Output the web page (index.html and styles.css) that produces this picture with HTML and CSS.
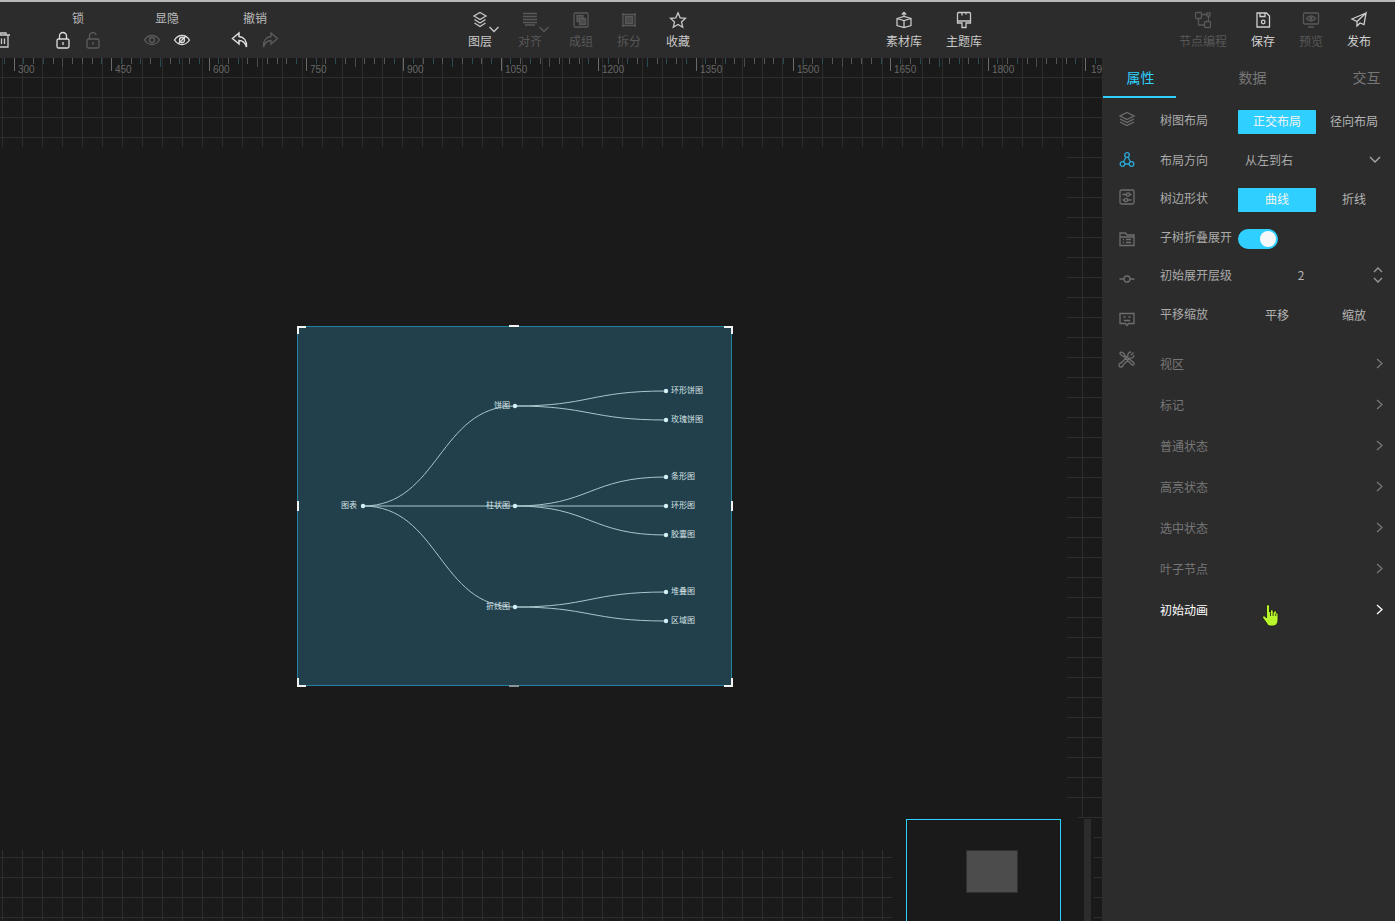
FILE: index.html
```html
<!DOCTYPE html>
<html lang="zh-CN">
<head>
<meta charset="utf-8">
<title>树图编辑器</title>
<link rel="stylesheet" href="styles.css">
</head>
<body>
<div class="app">
  <header class="toolbar">
    <div class="trash"><svg class="ic" width="16" height="18" viewBox="0 0 16 18"><path d="M1 4h14M5 4V2h6v2M3 4v12h10V4M6.500 7.500v5.500M9.500 7.500v5.500"/></svg></div>
    <div class="pair pair-lock">
      <div class="pair-title">锁</div>
      <div class="pair-icons">
        <svg class="ic" width="18" height="18" viewBox="0 0 18 18"><rect x="3" y="8" width="12" height="9" rx="1.500"/><path d="M5.500 8V5a3.500 3.500 0 0 1 7 0v3M9 11v3"/></svg>
        <svg class="ic dim" width="18" height="18" viewBox="0 0 18 18"><rect x="3" y="8" width="12" height="9" rx="1.500"/><path d="M5.500 8V5a3.500 3.500 0 0 1 6.800-1M9 11v3"/></svg>
      </div>
    </div>
    <div class="pair pair-eye">
      <div class="pair-title">显隐</div>
      <div class="pair-icons">
        <svg class="ic dim" width="18" height="18" viewBox="0 0 18 18"><path d="M1.500 9C3.500 5.800 6 4.500 9 4.500s5.500 1.300 7.500 4.500c-2 3.200-4.500 4.500-7.500 4.500S3.500 12.200 1.500 9z"/><circle cx="9" cy="9" r="2.500"/></svg>
        <svg class="ic" width="18" height="18" viewBox="0 0 18 18"><path d="M1.500 9C3.500 5.800 6 4.500 9 4.500s5.500 1.300 7.500 4.500c-2 3.200-4.500 4.500-7.500 4.500S3.500 12.200 1.500 9z"/><circle cx="9" cy="9" r="2.500"/><path d="M13 5 5 13"/></svg>
      </div>
    </div>
    <div class="pair pair-undo">
      <div class="pair-title">撤销</div>
      <div class="pair-icons">
        <svg class="ic thick" width="18" height="18" viewBox="0 0 18 18"><path d="M8 2 1.500 7.500 8 13V9.500c3.500 0 6 1.500 7.500 6.500.5-6-2.500-10-7.500-10.500z"/></svg>
        <svg class="ic dim" width="18" height="18" viewBox="0 0 18 18"><path d="M10 2 16.500 7.500 10 13V9.500c-3.500 0-6 1.500-7.500 6.500C2 10 5 6 10 5.500z"/></svg>
      </div>
    </div>

    <div class="tools tools-mid">
      <div class="tool tool-w50">
        <svg class="ic" width="18" height="18" viewBox="0 0 18 18"><path d="M9 1.500 15 5 9 8.500 3 5zM3.500 8.500 9 12l5.500-3.500M3.500 12 9 15.500l5.500-3.500"/></svg>
        <svg class="tool-caret ic" width="12" height="7" viewBox="0 0 12 7"><path d="M1.500 1 6 5.500 10.500 1"/></svg>
        <span>图层</span>
      </div>
      <div class="tool tool-w50 off">
        <svg class="ic" width="18" height="18" viewBox="0 0 18 18"><path d="M2 2.500h14M2 5.500h14M2 8.500h14M2 11.500h14M4 14h10"/></svg>
        <svg class="tool-caret ic" width="12" height="7" viewBox="0 0 12 7"><path d="M1.500 1 6 5.500 10.500 1"/></svg>
        <span>对齐</span>
      </div>
      <div class="tool tool-w48 tool-group off">
        <svg class="ic" width="18" height="18" viewBox="0 0 18 18"><rect x="2" y="2" width="14" height="14" rx="1"/><rect class="fill" x="5" y="4.500" width="6" height="6"/><rect class="fill" x="7.500" y="7.500" width="6" height="6"/></svg>
        <span>成组</span>
      </div>
      <div class="tool tool-w48 off">
        <svg class="ic" width="18" height="18" viewBox="0 0 18 18"><path d="M3 2v14M15 2v14M2 3.500h14M2 14.500h14"/><rect class="fill" x="5.500" y="5.500" width="7" height="7"/></svg>
        <span>拆分</span>
      </div>
      <div class="tool tool-w48 tool-star">
        <svg class="ic" width="18" height="18" viewBox="0 0 18 18"><path d="M9 1.800 11.200 6.800 16.500 7.300 12.500 10.900 13.700 16.200 9 13.400 4.300 16.200 5.500 10.900 1.500 7.300 6.800 6.800z"/></svg>
        <span>收藏</span>
      </div>
    </div>

    <div class="tools tools-lib">
      <div class="tool tool-w60">
        <svg class="ic" width="18" height="18" viewBox="0 0 18 18"><path d="M2 7.500 9 5.500l7 2v7l-7 2-7-2zM2 7.500l7 2 7-2M9 9.500v7M9 6V1.500M6.800 3.500 9 1.500l2.200 2"/></svg>
        <span>素材库</span>
      </div>
      <div class="tool tool-w60">
        <svg class="ic" width="18" height="18" viewBox="0 0 18 18"><path d="M3.500 1.500h11a1 1 0 0 1 1 1V10h-13V2.500a1 1 0 0 1 1-1zM2.500 10v2h4.500v4.500h4V12h4.500v-2M7 1.500v3M11 1.500v2"/></svg>
        <span>主题库</span>
      </div>
    </div>

    <div class="tools tools-end">
      <div class="tool tool-w60 off">
        <svg class="ic" width="18" height="18" viewBox="0 0 18 18"><rect x="1.500" y="1.500" width="6" height="6" rx="1"/><rect x="10.500" y="10.500" width="6" height="6" rx="1"/><rect x="13" y="2" width="3" height="3"/><path d="M7.500 3.500H13M14.500 5v5.500M4.500 7.500v6.500h6"/></svg>
        <span>节点编程</span>
      </div>
      <div class="tool tool-w48 tool-save bold">
        <svg class="ic" width="18" height="18" viewBox="0 0 18 18"><path d="M3 2h9.500L15.500 5v11H3zM6 2v3.500h5V2"/><circle cx="9.200" cy="11" r="1.800"/></svg>
        <span>保存</span>
      </div>
      <div class="tool tool-w48 off">
        <svg class="ic" width="18" height="18" viewBox="0 0 18 18"><rect x="1.500" y="2" width="15" height="11" rx="1"/><path d="M4.500 7.500C6 5.500 7.500 5 9 5s3 .5 4.500 2.500C12 9.500 10.500 10 9 10S6 9.500 4.500 7.500zM6 16h6"/><circle cx="9" cy="7.500" r="1"/></svg>
        <span>预览</span>
      </div>
      <div class="tool tool-w48 bold">
        <svg class="ic" width="18" height="18" viewBox="0 0 18 18"><path d="M16 2 2 8l5 2.500zM16 2 7 10.500V15l3-3 4 1.500z"/></svg>
        <span>发布</span>
      </div>
    </div>
  </header>

  <div class="workspace">
    <main class="canvas">
      <svg class="stage" width="1102" height="863" viewBox="0 0 1102 863">
        <defs>
          <pattern id="grid" width="20" height="20" patternUnits="userSpaceOnUse">
            <path class="grid-line" d="M2.500 0V20M0 19.500H20"/>
          </pattern>
        </defs>
        <rect class="grid-fill" x="0" y="0" width="1102" height="89"/>
        <rect class="grid-fill" x="1067" y="89" width="35" height="670"/>
        <rect class="grid-fill" x="0" y="792" width="892" height="71"/>
        <path class="grid-line" d="M1078 759.500H1102M1094 779.500H1102M1094 799.500H1102M1094 819.500H1102M1094 839.500H1102M1094 859.500H1102"/>

        <path class="tick-major" d="M14.500 0V13M111.500 0V13M209.500 0V13M306.500 0V13M403.500 0V13M501.500 0V13M598.500 0V13M696.500 0V13M793.500 0V13M890.500 0V13M988.500 0V13M1085.500 0V13"/>
        <path class="tick-mid" d="M62.500 0V9M257.500 0V9M355.500 0V9M549.500 0V9M744.500 0V9M842.500 0V9M1036.500 0V9"/>
        <path class="tick-teal-long" d="M160.500 0V9M452.500 0V9M647.500 0V9M939.500 0V9"/>
        <path class="tick-minor" d="M33.500 0V6M53.500 0V6M72.500 0V6M82.500 0V6M92.500 0V6M131.500 0V6M150.500 0V6M170.500 0V6M189.500 0V6M228.500 0V6M247.500 0V6M267.500 0V6M277.500 0V6M286.500 0V6M325.500 0V6M345.500 0V6M364.500 0V6M374.500 0V6M384.500 0V6M423.500 0V6M442.500 0V6M462.500 0V6M481.500 0V6M520.500 0V6M540.500 0V6M559.500 0V6M569.500 0V6M579.500 0V6M618.500 0V6M637.500 0V6M657.500 0V6M676.500 0V6M715.500 0V6M734.500 0V6M754.500 0V6M764.500 0V6M773.500 0V6M812.500 0V6M832.500 0V6M851.500 0V6M861.500 0V6M871.500 0V6M910.500 0V6M929.500 0V6M949.500 0V6M968.500 0V6M1007.500 0V6M1027.500 0V6M1046.500 0V6M1056.500 0V6M1066.500 0V6"/>
        <path class="tick-teal" d="M4.500 0V6M23.500 0V6M43.500 0V6M101.500 0V6M121.500 0V6M140.500 0V6M179.500 0V6M199.500 0V6M218.500 0V6M238.500 0V6M296.500 0V6M316.500 0V6M335.500 0V6M394.500 0V6M413.500 0V6M433.500 0V6M472.500 0V6M491.500 0V6M510.500 0V6M530.500 0V6M588.500 0V6M608.500 0V6M627.500 0V6M666.500 0V6M686.500 0V6M705.500 0V6M725.500 0V6M783.500 0V6M803.500 0V6M822.500 0V6M881.500 0V6M900.500 0V6M920.500 0V6M959.500 0V6M978.500 0V6M997.500 0V6M1017.500 0V6M1075.500 0V6M1095.500 0V6"/>
        <g class="ruler-text">
          <text x="18" y="15">300</text><text x="115" y="15">450</text><text x="213" y="15">600</text><text x="310" y="15">750</text><text x="407" y="15">900</text><text x="505" y="15">1050</text><text x="602" y="15">1200</text><text x="700" y="15">1350</text><text x="797" y="15">1500</text><text x="894" y="15">1650</text><text x="992" y="15">1800</text><text x="1091" y="15">1950</text>
        </g>

        <g transform="translate(0 -58)">
          <rect class="chart-bg" x="297.500" y="326.500" width="434" height="359"/>
          <g class="edges">
            <path d="M363 506C439 506 439 406 515 406"/>
            <path d="M363 506H515"/>
            <path d="M363 506C439 506 439 607 515 607"/>
            <path d="M515 406C590 406 590 391 666 391"/>
            <path d="M515 406C590 406 590 420 666 420"/>
            <path d="M515 506C590 506 590 477 666 477"/>
            <path d="M515 506H666"/>
            <path d="M515 506C590 506 590 535 666 535"/>
            <path d="M515 607C590 607 590 592 666 592"/>
            <path d="M515 607C590 607 590 621 666 621"/>
          </g>
          <g class="nodes">
            <circle cx="363" cy="506" r="2.200"/><circle cx="515" cy="406" r="2.200"/><circle cx="515" cy="506" r="2.200"/><circle cx="515" cy="607" r="2.200"/>
            <circle cx="666" cy="391" r="2.200"/><circle cx="666" cy="420" r="2.200"/><circle cx="666" cy="477" r="2.200"/><circle cx="666" cy="506" r="2.200"/><circle cx="666" cy="535" r="2.200"/><circle cx="666" cy="592" r="2.200"/><circle cx="666" cy="621" r="2.200"/>
          </g>
          <g class="node-text node-text-end">
            <text x="357" y="508">图表</text><text x="510" y="408">饼图</text><text x="510" y="508">柱状图</text><text x="510" y="609">折线图</text>
          </g>
          <g class="node-text">
            <text x="671" y="393">环形饼图</text><text x="671" y="422">玫瑰饼图</text><text x="671" y="479">条形图</text><text x="671" y="508">环形图</text><text x="671" y="537">胶囊图</text><text x="671" y="594">堆叠图</text><text x="671" y="623">区域图</text>
          </g>
          <path class="handle" d="M298 334V327H306M724 327H732V334M298 678V686H306M724 686H732V678"/>
          <path class="handle" d="M509 326H519M298 501V511M732 501V511"/>
          <path class="handle-dim" d="M509 686H519"/>
        </g>
      </svg>
      <div class="scroll-thumb"></div>
      <div class="minimap"><div class="minimap-view"></div></div>
    </main>

    <aside class="panel">
      <nav class="tabs">
        <div class="tab active">属性</div>
        <div class="tab">数据</div>
        <div class="tab">交互</div>
      </nav>
      <div class="panel-body">
        <div class="rail">
          <div class="rail-item"><svg class="ic" width="18" height="18" viewBox="0 0 18 18"><path d="M9 2.500 16 6 9 9.500 2 6zM2 9l7 3.500L16 9M2 12l7 3.500 7-3.500"/></svg></div>
          <div class="rail-item rail-blue"><svg class="ic" width="18" height="18" viewBox="0 0 18 18"><circle cx="9" cy="5" r="2.300"/><circle cx="4.500" cy="14" r="2.300"/><circle cx="13.500" cy="14" r="2.300"/><path d="M8 7 5.500 12M10 7l2.500 5M6.800 14h4.400"/></svg></div>
          <div class="rail-item rail-up"><svg class="ic" width="18" height="18" viewBox="0 0 18 18"><rect x="2" y="2" width="14" height="14" rx="1.500"/><path d="M4.500 6.500H8M12 6.500h1.500M4.500 12H6M10 12h3.500"/><circle cx="10" cy="6.500" r="1.700"/><circle cx="8" cy="12" r="1.700"/></svg></div>
          <div class="rail-item"><svg class="ic" width="18" height="18" viewBox="0 0 18 18"><path d="M2 3h5.500l1.500 2h7v10.500H2zM2 7h14M5 9.500h1M8 9.500h5M5 12.500h1M8 12.500h5"/></svg></div>
          <div class="rail-item"><svg class="ic" width="18" height="18" viewBox="0 0 18 18"><circle cx="9" cy="9" r="3"/><path d="M1.500 9H6M12 9h4.500"/></svg></div>
          <div class="rail-item"><svg class="ic" width="18" height="18" viewBox="0 0 18 18"><path d="M2 3.500h14v10h-5.500L9 15.500 7.500 13.500H2zM5.500 7h2M10.500 7h2M6 10.500h6"/></svg></div>
          <div class="rail-item"><svg class="ic" width="18" height="18" viewBox="0 0 18 18"><path d="M3 2 1.800 3.200 4 6l1.500 .2L14 15a1.500 1.500 0 0 0 2-2L6.500 5 6 3.500zM15.500 2.500l-2.700 2.700M13 2a3 3 0 0 0-3 4L3 13a2 2 0 1 0 2 2l7-7a3 3 0 0 0 4-3"/></svg></div>
        </div>
        <div class="form">
          <div class="row row-lift">
            <span class="row-label">树图布局</span>
            <div class="seg seg-on">正交布局</div>
            <div class="seg">径向布局</div>
          </div>
          <div class="row">
            <span class="row-label">布局方向</span>
            <div class="select"><span>从左到右</span><svg class="ic" width="12" height="7" viewBox="0 0 12 7"><path d="M1 1 6 6 11 1"/></svg></div>
          </div>
          <div class="row row-lift">
            <span class="row-label">树边形状</span>
            <div class="seg seg-on">曲线</div>
            <div class="seg">折线</div>
          </div>
          <div class="row row-lift">
            <span class="row-label">子树折叠展开</span>
            <div class="toggle"><span class="toggle-knob"></span></div>
          </div>
          <div class="row">
            <span class="row-label">初始展开层级</span>
            <div class="stepper-value">2</div>
            <div class="stepper-arrows">
              <svg class="ic" width="10" height="6" viewBox="0 0 10 6"><path d="M1 5 5 1 9 5"/></svg>
              <svg class="ic" width="10" height="6" viewBox="0 0 10 6"><path d="M1 1 5 5 9 1"/></svg>
            </div>
          </div>
          <div class="row row-lift">
            <span class="row-label">平移缩放</span>
            <div class="seg">平移</div>
            <div class="seg">缩放</div>
          </div>
          <div class="fold-list">
            <div class="fold">视区<svg class="ic" width="7" height="11" viewBox="0 0 7 11"><path d="M1 1 6 5.500 1 10"/></svg></div>
            <div class="fold">标记<svg class="ic" width="7" height="11" viewBox="0 0 7 11"><path d="M1 1 6 5.500 1 10"/></svg></div>
            <div class="fold">普通状态<svg class="ic" width="7" height="11" viewBox="0 0 7 11"><path d="M1 1 6 5.500 1 10"/></svg></div>
            <div class="fold">高亮状态<svg class="ic" width="7" height="11" viewBox="0 0 7 11"><path d="M1 1 6 5.500 1 10"/></svg></div>
            <div class="fold">选中状态<svg class="ic" width="7" height="11" viewBox="0 0 7 11"><path d="M1 1 6 5.500 1 10"/></svg></div>
            <div class="fold">叶子节点<svg class="ic" width="7" height="11" viewBox="0 0 7 11"><path d="M1 1 6 5.500 1 10"/></svg></div>
            <div class="fold fold-hot">初始动画<svg class="ic" width="7" height="11" viewBox="0 0 7 11"><path d="M1 1 6 5.500 1 10"/></svg></div>
          </div>
        </div>
      </div>
      <svg class="cursor" width="17" height="23" viewBox="0 0 17 23"><path d="M4.500 2a1.500 1.500 0 0 1 3 0V8h1V7a1.300 1.300 0 0 1 2.600 0v1.500h.7V8a1.300 1.300 0 0 1 2.600 0v1h.3a1.300 1.300 0 0 1 1.300 1.300V16c0 3.500-2 6-5 6H8.500c-2 0-3-1-4-3L.8 14c-.8-1.500 1-3 2.200-1.800L4.500 14z"/><path class="cursor-lines" d="M8.500 8.500V12M11.100 9V12M13.800 9.500V12"/></svg>
    </aside>
  </div>
</div>
</body>
</html>
```

FILE: styles.css
```css
* { box-sizing: border-box; }
html, body { margin: 0; height: 100%; }
body {
  overflow: hidden;
  background: #1a1a1a;
  color: #bbb;
  font-family: "Noto Sans CJK SC", "Liberation Sans", sans-serif;
  font-size: 12px;
}
.app {
  display: flex;
  flex-direction: column;
  height: 100vh;
  border-top: 2px solid #b8b8b8;
}

.ic { display: block; fill: none; stroke: currentColor; stroke-width: 1.3; }
.ic .fill { fill: #4a4a4a; }
.ic.thick { stroke-width: 1.5; color: #ddd; }
.ic.dim { color: #5c5c5c; }

/* toolbar */
.toolbar {
  display: flex;
  flex: none;
  height: 56px;
  background: #2c2c2c;
}
.trash { width: 16px; margin-left: -5px; margin-top: 29px; color: #ccc; }
.pair { width: 60px; display: flex; flex-direction: column; align-items: center; }
.pair-lock { margin-left: 37px; }
.pair-eye { margin-left: 29px; }
.pair-undo { margin-left: 28px; }
.pair-title { height: 16px; margin-top: 8px; line-height: 16px; color: #bbb; }
.pair-icons { display: flex; justify-content: space-between; width: 48px; margin-top: 5px; color: #ddd; }

.tools { display: flex; }
.tools-mid { margin-left: 170px; }
.tools-lib { margin-left: 172px; }
.tools-end { margin-left: 179px; }
.tool {
  position: relative;
  display: flex;
  flex-direction: column;
  align-items: center;
  padding-top: 9px;
  color: #c8c8c8;
}
.tool span { margin-top: 4px; line-height: 16px; white-space: nowrap; }
.tool.off { color: #585858; }
.tool.bold { color: #d0d0d0; }
.tool-w50 { width: 50px; }
.tool-w48 { width: 48px; }
.tool-w60 { width: 60px; }
.tool-group { margin-left: 2px; }
.tool-star { margin-left: 1px; }
.tool-save { margin-left: 6px; color: #d0d0d0; }
.tool-caret { position: absolute; left: 33px; top: 24px; }

/* workspace */
.workspace { display: flex; flex: 1; min-height: 0; }
.canvas { position: relative; flex: none; width: 1102px; overflow: hidden; background: #1a1a1a; }
.stage { display: block; }
.grid-fill { fill: url(#grid); }
.grid-line { fill: none; stroke: #2e2e2e; stroke-width: 1; shape-rendering: crispEdges; }
.tick-major { stroke: #6a6a6a; shape-rendering: crispEdges; }
.tick-mid { stroke: #4a4a4a; shape-rendering: crispEdges; }
.tick-minor { stroke: #555; shape-rendering: crispEdges; }
.tick-teal { stroke: #2b4a56; shape-rendering: crispEdges; }
.tick-teal-long { stroke: #2b4a56; shape-rendering: crispEdges; }
.ruler-text { fill: #666; font-family: "Liberation Sans", sans-serif; font-size: 10px; }

.chart-bg { fill: #21404c; stroke: #23829f; stroke-width: 1; shape-rendering: crispEdges; }
.edges path { fill: none; stroke: #a9c6cc; stroke-width: 1; }
.nodes circle { fill: #d4f1f8; }
.node-text { fill: #d6e2e5; font-size: 8px; }
.node-text-end { text-anchor: end; }
.handle { fill: none; stroke: #f2f2f2; stroke-width: 2; shape-rendering: crispEdges; }
.handle-dim { fill: none; stroke: #8a9498; stroke-width: 2; shape-rendering: crispEdges; }

.scroll-thumb { position: absolute; left: 1084px; top: 761px; bottom: 0; width: 7px; background: #2c2c2c; }
.minimap {
  position: absolute;
  left: 906px;
  top: 761px;
  width: 155px;
  height: 120px;
  padding: 30px 0 0 59px;
  background: #1a1a1a;
  border: 1px solid #2fd0ff;
}
.minimap-view { width: 52px; height: 43px; background: #4c4c4c; border: 1px solid #303030; }

/* panel */
.panel { position: relative; flex: 1; overflow: hidden; background: #2c2c2c; }
.tabs { display: flex; gap: 40px; height: 40px; margin-left: 1px; }
.tab { flex: none; width: 73px; height: 40px; line-height: 39px; text-align: center; font-size: 14px; color: #777; }
.tab:nth-child(odd) { padding-left: 2px; }
.tab.active { color: #2fd0ff; border-bottom: 2px solid #2fd0ff; }
.panel-body { display: flex; }
.rail { flex: none; width: 58px; padding-top: 1px; }
.rail-item { height: 40px; padding: 11px 0 0 16px; color: #6e6e6e; }
.rail-blue { color: #2aa7d6; }
.rail-up { padding-top: 9px; }

.form { flex: 1; padding-top: 12px; }
.row { display: flex; align-items: center; height: 24px; }
.row:nth-child(2) { margin-top: 14px; }
.row:nth-child(3) { margin-top: 16px; }
.row:nth-child(4) { margin-top: 15px; }
.row:nth-child(5) { margin-top: 12px; }
.row:nth-child(6) { margin-top: 17px; }
.row-label { flex: none; width: 78px; margin-top: -2px; color: #aaa; white-space: nowrap; }
.row-lift .row-label { margin-top: -6px; }
.seg { flex: none; width: 78px; height: 24px; line-height: 22px; text-align: center; color: #b4b4b4; }
.seg + .seg { margin-left: -1px; }
.seg-on { background: #2fd0ff; color: #f4f4f4; border-radius: 1px; }
.select { display: flex; flex: none; align-items: center; justify-content: space-between; width: 156px; height: 22px; margin-top: -2px; padding: 0 13px 0 7px; color: #aaa; }
.toggle { flex: none; display: flex; justify-content: flex-end; align-items: center; width: 40px; height: 20px; padding-right: 2px; background: #2fd0ff; border-radius: 10px; }
.toggle-knob { width: 16px; height: 16px; background: #f5f7f8; border-radius: 50%; }
.stepper-value { flex: none; width: 126px; margin-top: -2px; text-align: center; color: #b4b4b4; }
.stepper-arrows { display: flex; flex-direction: column; gap: 4px; margin-left: 9px; color: #999; }

.fold-list { margin-top: 15px; }
.fold { display: flex; align-items: center; justify-content: space-between; height: 41px; padding-right: 12px; color: #777; }
.fold-hot { color: #fff; }

.cursor { position: absolute; left: 160px; top: 546px; fill: #b8f52c; stroke: #141414; stroke-width: .8; }
.cursor-lines { fill: none; }
```
